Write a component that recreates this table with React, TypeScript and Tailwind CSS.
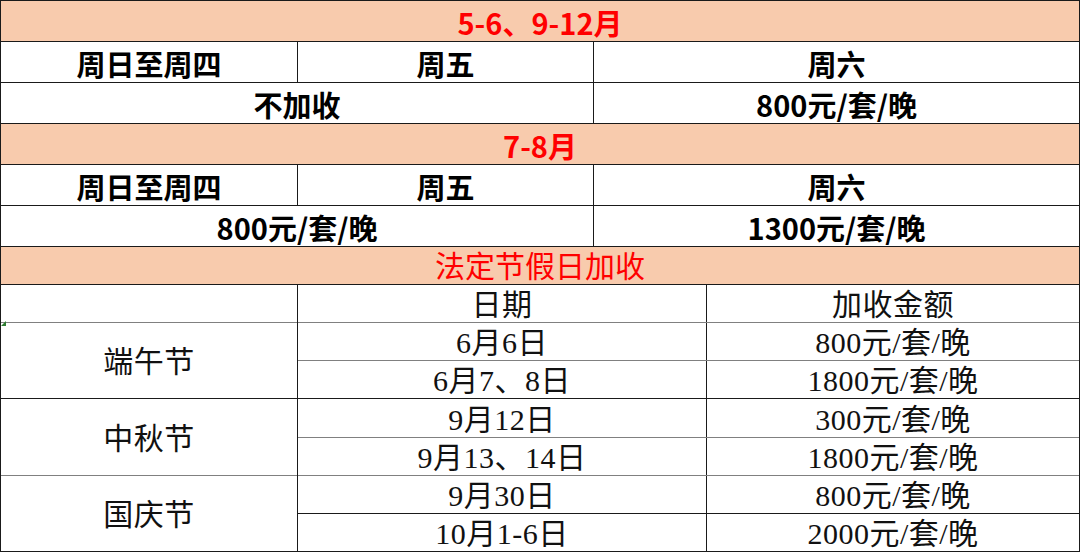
const bold = "font-['Noto_Sans_CJK_SC',sans-serif] font-bold text-[29px] leading-none text-black pt-[3px]";
const song = "font-['Liberation_Serif','Noto_Sans_CJK_SC',serif] text-[30px] leading-none tracking-[0.5px] text-[#111] pt-[3px]";

type Rate = { date: string; amount: string; h: string; line: string };

const rates: Rate[] = [
  { date: "6月6日", amount: "800元/套/晚", h: "h-[38px]", line: "border-[#808080]" },
  { date: "6月7、8日", amount: "1800元/套/晚", h: "h-[38px]", line: "border-[#1a1a1a]" },
  { date: "9月12日", amount: "300元/套/晚", h: "h-[39px]", line: "border-[#808080]" },
  { date: "9月13、14日", amount: "1800元/套/晚", h: "h-[38px]", line: "border-[#808080]" },
  { date: "9月30日", amount: "800元/套/晚", h: "h-[38px]", line: "border-[#1a1a1a]" },
  { date: "10月1-6日", amount: "2000元/套/晚", h: "h-[38px]", line: "border-[#1a1a1a]" },
];

const festivals = [
  { name: "端午节", h: "h-[76px]", line: "border-[#1a1a1a]" },
  { name: "中秋节", h: "h-[77px]", line: "border-[#808080]" },
  { name: "国庆节", h: "h-[76px]", line: "border-[#1a1a1a]" },
];

function Banner({ text, h, className }: { text: string; h: string; className: string }) {
  return (
    <div className={`${h} flex items-center justify-center border-b border-[#1a1a1a] bg-[#f8cbad]`}>
      <span className={className}>{text}</span>
    </div>
  );
}

function Season({ title, weekday, weekend }: { title: string; weekday: string; weekend: string }) {
  return (
    <>
      <Banner text={title} h="h-[41px]" className="font-['Noto_Sans_CJK_SC',sans-serif] font-bold text-[29px] leading-none text-[#ff0000] pt-[3px]" />
      <div className="flex h-[41px] border-b border-[#1a1a1a]">
        <div className={`flex w-[297px] items-center justify-center border-r border-[#1a1a1a] ${bold}`}>周日至周四</div>
        <div className={`flex w-[296px] items-center justify-center border-r border-[#1a1a1a] ${bold}`}>周五</div>
        <div className={`flex flex-1 items-center justify-center ${bold}`}>周六</div>
      </div>
      <div className="flex h-[41px] border-b border-[#1a1a1a]">
        <div className={`flex w-[593px] items-center justify-center border-r border-[#1a1a1a] ${bold}`}>{weekday}</div>
        <div className={`flex flex-1 items-center justify-center ${bold}`}>{weekend}</div>
      </div>
    </>
  );
}

export default function App() {
  return (
    <div className="h-[554px] w-[1080px] bg-white">
      <div className="w-[1080px] border-l border-r border-t border-[#1a1a1a] bg-white">
        <Season title="5-6、9-12月" weekday="不加收" weekend="800元/套/晚" />
        <Season title="7-8月" weekday="800元/套/晚" weekend="1300元/套/晚" />

        <Banner text="法定节假日加收" h="h-[38px]" className="font-['Liberation_Serif','Noto_Sans_CJK_SC',serif] text-[30px] leading-none text-[#ff0000] pt-[3px]" />

        <div className="flex">
          <div className="relative flex w-[297px] flex-col border-r border-[#1a1a1a]">
            <div className="h-[38px] border-b border-[#808080]" />
            {/* little green marker from the spreadsheet */}
            <div className="absolute left-0 top-[36px] h-0 w-0 border-l-[5px] border-t-[5px] border-l-transparent border-t-[#2e7d32] rotate-90" />
            {festivals.map((f) => (
              <div key={f.name} className={`flex ${f.h} items-center justify-center border-b ${f.line} ${song}`}>
                {f.name}
              </div>
            ))}
          </div>

          <div className="flex flex-1 flex-col">
            <div className="flex h-[38px] border-b border-[#808080]">
              <div className={`flex w-[409px] items-center justify-center border-r border-[#1a1a1a] ${song}`}>日期</div>
              <div className={`flex flex-1 items-center justify-center ${song}`}>加收金额</div>
            </div>
            {rates.map((r) => (
              <div key={r.date} className={`flex ${r.h} border-b ${r.line}`}>
                <div className={`flex w-[409px] items-center justify-center border-r border-[#1a1a1a] ${song}`}>{r.date}</div>
                <div className={`flex flex-1 items-center justify-center ${song}`}>{r.amount}</div>
              </div>
            ))}
          </div>
        </div>
      </div>
    </div>
  );
}
